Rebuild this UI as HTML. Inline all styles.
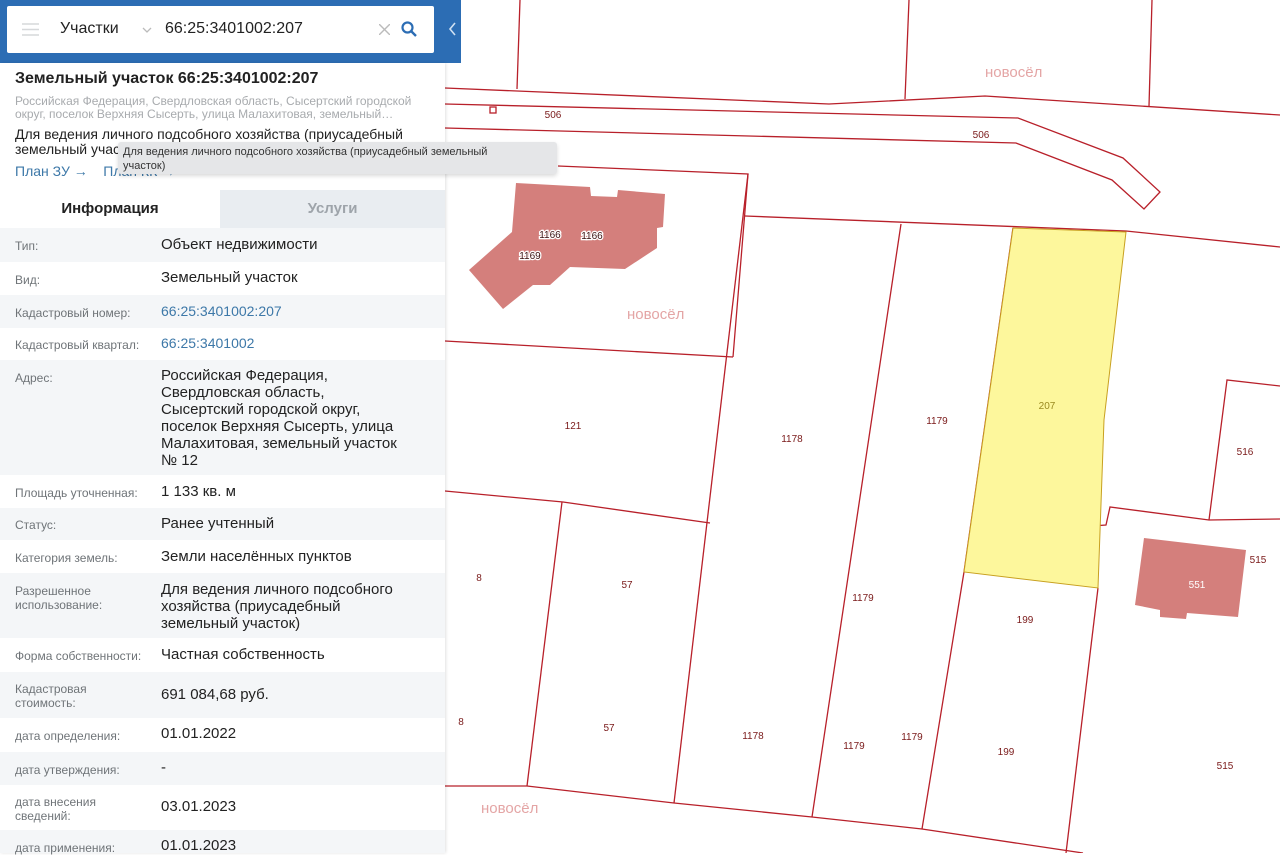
<!DOCTYPE html>
<html><head><meta charset="utf-8"><style>
*{box-sizing:border-box;margin:0;padding:0}
body{width:1280px;height:853px;overflow:hidden;background:#fff;font-family:"Liberation Sans",Arial,sans-serif;position:relative}
#map{position:absolute;left:0;top:0}
.bar{position:absolute;left:0;top:0;width:461px;height:63px;background:#2c6db4}
.box{position:absolute;left:7px;top:6px;width:427px;height:47px;background:#fff;border-radius:2px}
.panel{position:absolute;left:0;top:63px;width:445px;height:790px;background:#fff;box-shadow:1px 0 3px rgba(0,0,0,.12)}
.row{position:absolute;left:0;width:445px}
.row.g{background:#f4f6f8}
.lab{position:absolute;left:15px;font-size:12px;color:#6f7478;line-height:14px}
.val{position:absolute;left:161px;font-size:15px;color:#222;line-height:17px;white-space:nowrap}
.lnk{color:#3d78a8}
.tip{position:absolute;left:118px;top:142px;width:439px;height:32px;background:#e5e6e8;border-radius:3px;box-shadow:0 2px 4px rgba(0,0,0,.15);font-size:11px;color:#333;padding:3px 0 0 5px;line-height:14px}
</style></head><body>
<svg id="map" width="1280" height="853" viewBox="0 0 1280 853">
<g fill="none" stroke="#b8202a" stroke-width="1.3">
<polyline points="520,0 517,89"/>
<polyline points="909,0 905,99"/>
<polyline points="1152,0 1149,106"/>
<polyline points="445,88 829,104 985,96 1280,115"/>
<polyline points="445,104 1018,118 1123,158 1160,192 1144,209 1112,180 1016,143 445,128"/>
<polyline points="558,166 748,174 733,357"/>
<polyline points="445,341 733,357"/>
<polyline points="745,216 1126,231 1280,247"/>
<polyline points="748,174 674,803"/>
<polyline points="901,224 812,817"/>
<polyline points="1013,228 964,572 922,829"/>
<polyline points="445,491 563,502 710,523"/>
<polyline points="562,502 527,786"/>
<polyline points="445,786 527,786 674,803 812,817 922,829 1083,853"/>
<polyline points="1098,588 1066,853"/>
<polyline points="1092,526 1106,525 1110,507 1209,520 1280,519"/>
<polyline points="1280,386 1227,380 1209,520"/>
<rect x="490" y="107" width="6" height="6"/>
</g>
<polygon points="1013,228 1126,232 1104,420 1098,588 964,572" fill="#fdf79c" stroke="#c8a020" stroke-width="1"/>
<polygon points="516,183 590,187 591,196 617,197 618,190 665,194 663,227 657,228 657,248 625,269 570,267 550,285 533,285 503,309 469,270 512,232" fill="#d47f7c"/>
<polygon points="1144,538 1246,550 1238,617 1187,613 1186,619 1160,617 1160,610 1135,605" fill="#d47f7c"/>
<g font-family="Liberation Sans, sans-serif" font-size="10" fill="#7a1a1a" text-anchor="middle">
<text x="553" y="118">506</text><text x="981" y="138">506</text>
<text x="573" y="429">121</text><text x="792" y="442">1178</text><text x="937" y="424">1179</text>
<text x="1047" y="409" fill="#9a8a20">207</text><text x="1245" y="455">516</text><text x="1258" y="563">515</text>
<text x="479" y="581">8</text><text x="627" y="588">57</text><text x="863" y="601">1179</text><text x="1025" y="623">199</text>
<text x="461" y="725">8</text><text x="609" y="731">57</text><text x="753" y="739">1178</text><text x="854" y="749">1179</text>
<text x="912" y="740">1179</text><text x="1006" y="755">199</text><text x="1225" y="769">515</text>
<text x="1197" y="588" fill="#fff">551</text>
</g>
<g font-family="Liberation Sans, sans-serif" font-size="10" fill="#3a1010" text-anchor="middle" stroke="#fff" stroke-width="2.5" paint-order="stroke">
<text x="550" y="238">1166</text><text x="592" y="239">1166</text><text x="530" y="259">1169</text>
</g>
<g font-family="Liberation Sans, sans-serif" font-size="15" fill="#e4a5a5">
<text x="985" y="77">новосёл</text><text x="627" y="319">новосёл</text><text x="481" y="813">новосёл</text>
</g>
</svg>
<div class="bar"></div>
<div class="box">
<svg style="position:absolute;left:15px;top:17px" width="17" height="13"><g stroke="#d6d8da" stroke-width="1.5"><line x1="0" y1="1" x2="17" y2="1"/><line x1="0" y1="6.5" x2="17" y2="6.5"/><line x1="0" y1="12" x2="17" y2="12"/></g></svg>
<div style="position:absolute;left:53px;top:14px;font-size:16px;color:#222">Участки</div>
<svg style="position:absolute;left:135px;top:21px" width="10" height="6"><polyline points="1,1 5,5 9,1" fill="none" stroke="#bbb" stroke-width="1.3"/></svg>
<div style="position:absolute;left:158px;top:14px;font-size:16px;color:#222">66:25:3401002:207</div>
<svg style="position:absolute;left:372px;top:18px" width="11" height="11"><g stroke="#bbb" stroke-width="1.4"><line x1="0" y1="0" x2="11" y2="11"/><line x1="11" y1="0" x2="0" y2="11"/></g></svg>
<svg style="position:absolute;left:394px;top:15px" width="16" height="16"><circle cx="6.5" cy="6.5" r="5" fill="none" stroke="#2c6db4" stroke-width="2.2"/><line x1="10" y1="10" x2="15" y2="15" stroke="#2c6db4" stroke-width="2.4"/></svg>
</div>
<svg style="position:absolute;left:448px;top:22px" width="9" height="14"><polyline points="7,1 2,7 7,13" fill="none" stroke="#cfe0f2" stroke-width="1.6"/></svg>
<div class="panel">
<div style="position:absolute;left:15px;top:7px;font-size:16px;font-weight:bold;color:#222">Земельный участок 66:25:3401002:207</div>
<div style="position:absolute;left:15px;top:32px;width:430px;font-size:12px;color:#a8abae;line-height:13px;white-space:nowrap">Российская Федерация, Свердловская область, Сысертский городской<br>округ, поселок Верхняя Сысерть, улица Малахитовая, земельный…</div>
<div style="position:absolute;left:15px;top:64px;width:420px;font-size:14px;color:#222;line-height:15px">Для ведения личного подсобного хозяйства (приусадебный земельный участок)</div>
<div style="position:absolute;left:15px;top:100px;font-size:14px;color:#3d78a8">План ЗУ →&nbsp;&nbsp;&nbsp;&nbsp;План КК →</div>
<div style="position:absolute;left:0;top:127px;width:220px;height:38px;background:#fff;font-size:15px;font-weight:bold;color:#222;text-align:center;line-height:38px">Информация</div>
<div style="position:absolute;left:220px;top:127px;width:225px;height:38px;background:#e9edf1;font-size:15px;font-weight:bold;color:#9ea4aa;text-align:center;line-height:38px">Услуги</div>
</div>
<div class="row g" style="top:228px;height:34px"><div class="lab" style="top:11px">Тип:</div><div class="val" style="top:8px">Объект недвижимости</div></div>
<div class="row" style="top:262px;height:33px"><div class="lab" style="top:11px">Вид:</div><div class="val" style="top:7px">Земельный участок</div></div>
<div class="row g" style="top:295px;height:33px"><div class="lab" style="top:11px">Кадастровый номер:</div><div class="val lnk" style="top:8px;font-size:14px">66:25:3401002:207</div></div>
<div class="row" style="top:328px;height:32px"><div class="lab" style="top:10px">Кадастровый квартал:</div><div class="val lnk" style="top:7px;font-size:14px">66:25:3401002</div></div>
<div class="row g" style="top:360px;height:115px"><div class="lab" style="top:11px">Адрес:</div><div class="val" style="top:7px">Российская Федерация,<br>Свердловская область,<br>Сысертский городской округ,<br>поселок Верхняя Сысерть, улица<br>Малахитовая, земельный участок<br>№ 12</div></div>
<div class="row" style="top:475px;height:33px"><div class="lab" style="top:11px">Площадь уточненная:</div><div class="val" style="top:8px">1 133 кв. м</div></div>
<div class="row g" style="top:508px;height:32px"><div class="lab" style="top:10px">Статус:</div><div class="val" style="top:7px">Ранее учтенный</div></div>
<div class="row" style="top:540px;height:33px"><div class="lab" style="top:11px">Категория земель:</div><div class="val" style="top:8px">Земли населённых пунктов</div></div>
<div class="row g" style="top:573px;height:65px"><div class="lab" style="top:11px">Разрешенное<br>использование:</div><div class="val" style="top:8px">Для ведения личного подсобного<br>хозяйства (приусадебный<br>земельный участок)</div></div>
<div class="row" style="top:638px;height:34px"><div class="lab" style="top:11px">Форма собственности:</div><div class="val" style="top:8px">Частная собственность</div></div>
<div class="row g" style="top:672px;height:46px"><div class="lab" style="top:10px">Кадастровая<br>стоимость:</div><div class="val" style="top:14px">691 084,68 руб.</div></div>
<div class="row" style="top:718px;height:34px"><div class="lab" style="top:11px">дата определения:</div><div class="val" style="top:7px">01.01.2022</div></div>
<div class="row g" style="top:752px;height:33px"><div class="lab" style="top:11px">дата утверждения:</div><div class="val" style="top:7px">-</div></div>
<div class="row" style="top:785px;height:45px"><div class="lab" style="top:10px">дата внесения<br>сведений:</div><div class="val" style="top:13px">03.01.2023</div></div>
<div class="row g" style="top:830px;height:23px"><div class="lab" style="top:11px">дата применения:</div><div class="val" style="top:7px">01.01.2023</div></div>
<div class="tip">Для ведения личного подсобного хозяйства (приусадебный земельный<br>участок)</div>
</body></html>
